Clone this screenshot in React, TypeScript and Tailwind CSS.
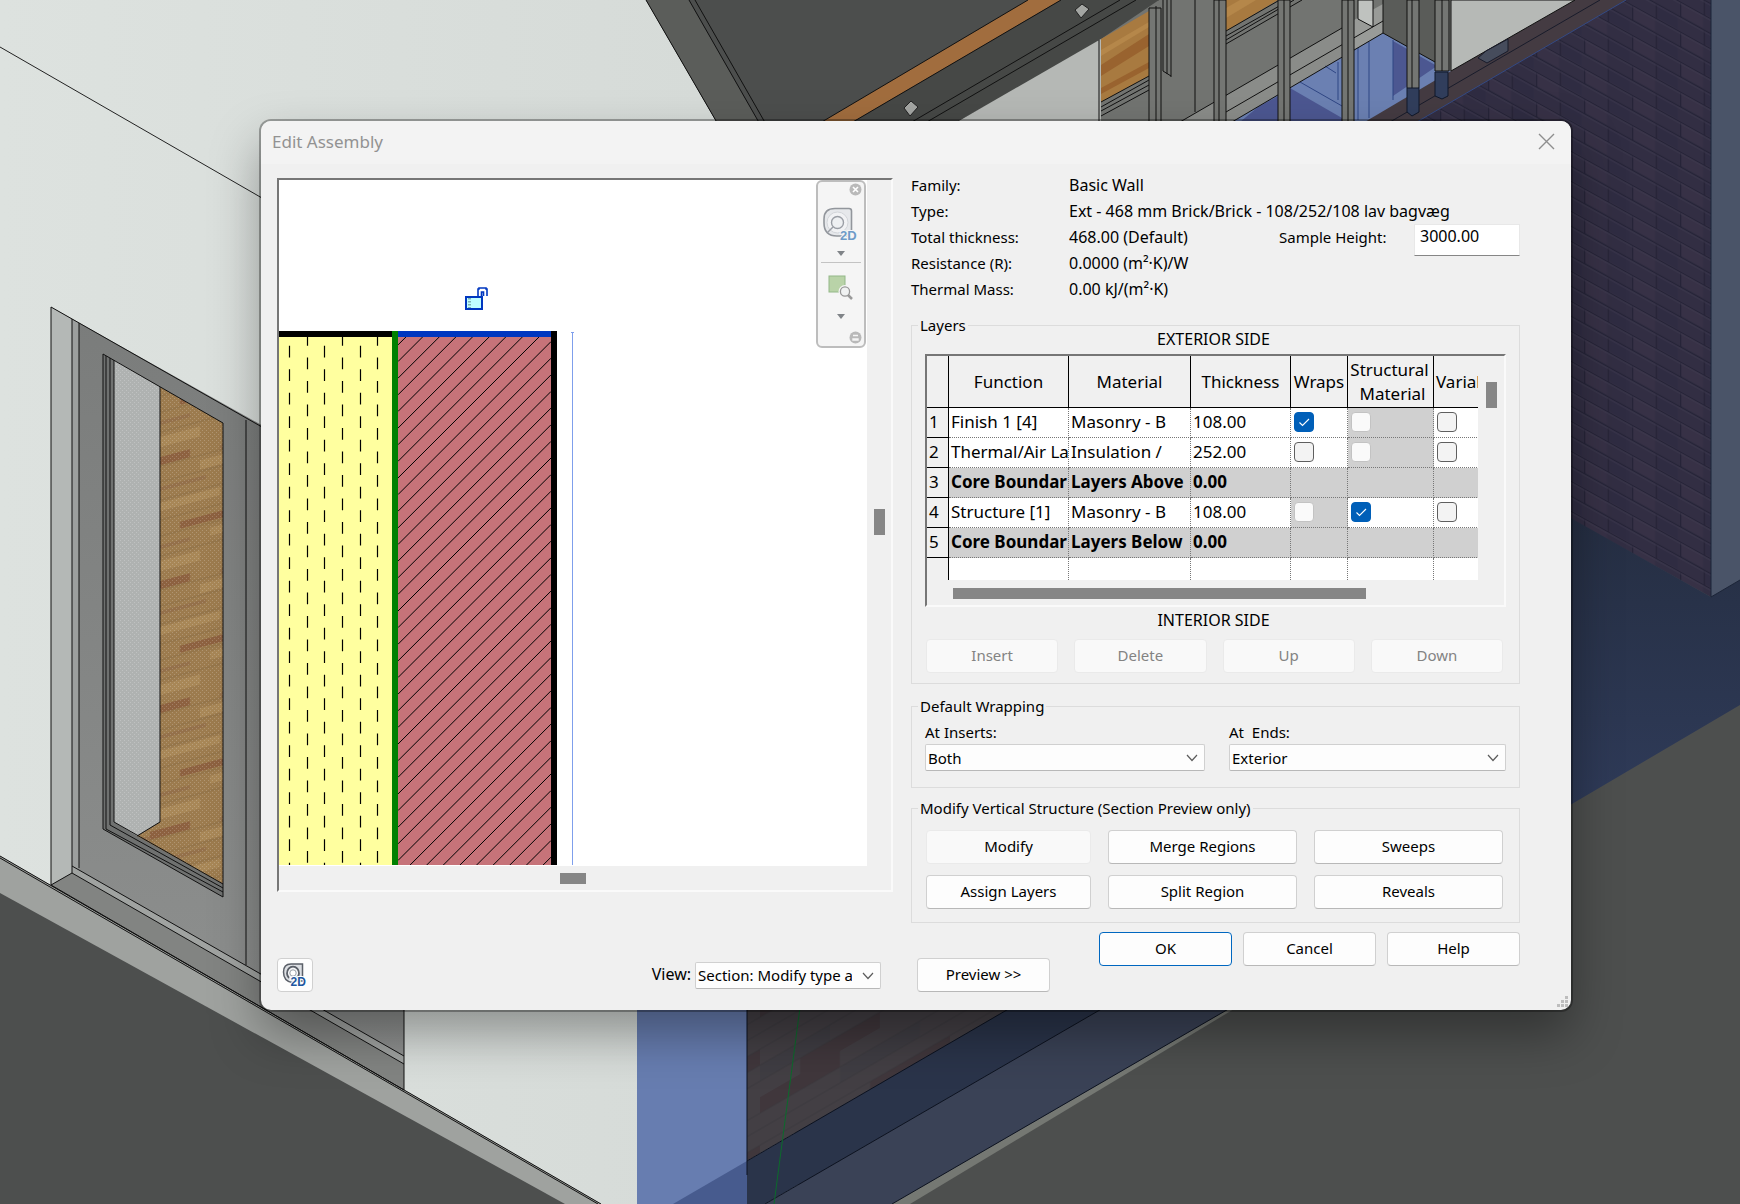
import { useState, ReactNode } from 'react';
import clsx from 'clsx';

interface LayerRow {
  func: string;
  material: string;
  thickness: string;
  core?: boolean;
  wraps?: boolean;
  wrapsLocked?: boolean;
  structural?: boolean;
  structuralLocked?: boolean;
}

const layers: LayerRow[] = [
  { func: 'Finish 1 [4]', material: 'Masonry - B', thickness: '108.00', wraps: true, structuralLocked: true },
  { func: 'Thermal/Air La', material: 'Insulation /', thickness: '252.00', structuralLocked: true },
  { func: 'Core Boundar', material: 'Layers Above', thickness: '0.00', core: true },
  { func: 'Structure [1]', material: 'Masonry - B', thickness: '108.00', wrapsLocked: true, structural: true },
  { func: 'Core Boundar', material: 'Layers Below', thickness: '0.00', core: true },
];

const info = [
  ['Family:', 'Basic Wall'],
  ['Type:', 'Ext - 468 mm Brick/Brick - 108/252/108 lav bagvæg'],
  ['Total thickness:', '468.00 (Default)'],
  ['Resistance (R):', '0.0000 (m²·K)/W'],
  ['Thermal Mass:', '0.00 kJ/(m²·K)'],
];

function Scene() {
  return (
    <svg className="absolute inset-0 w-full h-full" viewBox="0 0 1740 1204" preserveAspectRatio="xMidYMid slice" aria-hidden="true">
      <defs>
        <pattern id="brick" width="48" height="30" patternUnits="userSpaceOnUse" patternTransform="skewY(29)">
          <rect width="48" height="30" fill="#322e43" />
          <rect x="1" y="1" width="22" height="13" fill="#373146" />
          <rect x="26" y="16" width="20" height="13" fill="#2f2c42" />
          <path d="M0 .5H48M0 15.5H48M.5 0V15M24.5 15V30" stroke="#252337" strokeWidth="1.4" />
          <path d="M0 2H48M0 17H48" stroke="#413c53" strokeWidth=".7" />
        </pattern>
        <pattern id="planks" width="150" height="124" patternUnits="userSpaceOnUse" patternTransform="skewY(-15)">
          <rect width="150" height="124" fill="#9c7b4e" />
          <path d="M0 4H40V12H0zM90 40H150V47H90zM30 74H96V81H30zM110 100H150V107H110z" fill="#8d6140" />
          <path d="M50 18H150V27H50zM0 50H70V58H0zM60 88H130V96H60zM0 108H50V118H0z" fill="#a88757" />
          <path d="M70 8H150V13H70zM0 34H56V38H0zM100 62H150V67H100zM0 92H40V96H0z" fill="#94704a" />
          <path d="M0 13H150M0 29H150M0 47H150M0 67H150M0 83H150M0 103H150" stroke="#8a6b45" strokeWidth=".8" />
        </pattern>
        <pattern id="darkPlanks" width="190" height="96" patternUnits="userSpaceOnUse" patternTransform="skewY(-30)">
          <rect width="190" height="96" fill="#433f44" />
          <path d="M0 0H80V16H0zM110 48H190V64H110zM40 80H120V96H40z" fill="#40373c" />
          <path d="M80 16H160V32H80zM0 64H70V80H0z" fill="#3f3d43" />
          <path d="M0 16H190M0 32H190M0 48H190M0 64H190M0 80H190" stroke="#3a373d" strokeWidth=".8" />
        </pattern>
        <pattern id="mesh" width="4" height="4" patternUnits="userSpaceOnUse">
          <path d="M0 0h1v1H0zM2 2h1v1H2z" fill="#fff" opacity=".2" />
        </pattern>
        <linearGradient id="wall" x2="1">
          <stop offset="0" stopColor="#dde2df" />
          <stop offset="1" stopColor="#d5dad7" />
        </linearGradient>
        <linearGradient id="frame" y1="0" y2="1" x2="0">
          <stop offset="0" stopColor="#7a7c7b" />
          <stop offset="1" stopColor="#8f9190" />
        </linearGradient>
        <linearGradient id="navy" y1="0" y2="1" x2="0">
          <stop offset="0" stopColor="#252e42" />
          <stop offset="1" stopColor="#2f3b59" />
        </linearGradient>
      </defs>
      <rect width="1740" height="1204" fill="#4d4f4e" />

      {/* left facade */}
      <path d="M0 0H646L720 128L800 1204H601L0 856z" fill="url(#wall)" />
      <path d="M0 47L262 198" stroke="#222" fill="none" />
      <path d="M0 856L601 1204H565L0 893z" fill="#9fa29f" />
      <path d="M51 307L404 505V1090L51 885z" fill="url(#frame)" />
      <path d="M51 307L72 319V873L51 885z" fill="#b4b8b6" />
      <path d="M72 319L79 323V868L72 873z" fill="#9c9f9e" />
      <path d="M51 885L72 873L404 1064V1090z" fill="#828482" />
      <path d="M72 866L404 1056V1064L72 873z" fill="#a0a3a1" />
      <path d="M103 354L223 423V897L103 829z" fill="#6f7170" />
      <path d="M114 360L160 387V822L137 836L114 822z" fill="#afb2b1" />
      <path d="M160 387L223 423V884L137 836L160 822z" fill="url(#planks)" />
      <path d="M114 360L223 423V884L114 822z" fill="url(#mesh)" />
      <path
        d="M51 885V307L262 427M72 873V319M79 868V323M51 885L72 873M103 354L223 423V897L103 829zM106 356V829M110 358V825M114 360V822L223 884M106 829L223 892M110 825L223 888M160 387V822L137 836M246 420V965M72 866L404 1056M72 873L404 1064M51 885L404 1090M404 1000V1090"
        stroke="#111"
        fill="none"
      />
      <path d="M0 856L601 1204M0 858L598 1204" stroke="#111" fill="none" />

      {/* lower blue corner */}
      <path d="M637 1000H747V1204H637z" fill="#677db0" />
      <path d="M747 1161L673 1204H747z" fill="#475b8e" />
      <path d="M747 1000H1024L747 1161z" fill="url(#darkPlanks)" />
      <path d="M747 1161L1024 1000H1117L765 1204H747z" fill="#2a344a" />
      <path d="M1117 1000H1244L892 1204H765z" fill="#3a4256" />
      <path d="M1244 1000H1249L910 1204H892z" fill="#757873" />
      <path d="M747 1161L1024 1000M765 1204L1117 1000M892 1204L1244 1000M747 1000V1175" stroke="#0c1220" fill="none" />
      <path d="M801 1000L774 1204" stroke="#0c6b2c" fill="none" />

      {/* roof and beam */}
      <path d="M646 0H1159L950 126H719z" fill="#4c4e4d" />
      <path d="M646 0H689L761 126H719z" fill="#5b5d5a" />
      <path d="M646 0L719 126M689 0L761 126M695 0L767 126" stroke="#111" fill="none" />
      <path d="M1028 0H1061L846 126H815z" fill="#a16d3e" />
      <path d="M1061 0H1159Q1157 12 1148 18L950 126H846z" fill="#464846" />
      <path d="M1028 0L815 126M1061 0L846 126M1120 0L905 126M1136 0L920 126M1159 0Q1157 12 1148 18L950 126" stroke="#111" fill="none" />
      <path d="M1075 10L1082 4L1089 9L1081 18zM904 108L911 101L918 107L910 116z" fill="#a4a6a3" stroke="#222" />

      {/* framing */}
      <path d="M950 126L1101 39V126z" fill="#b5b8b5" />
      <path d="M1101 39L1159 0H1454V71L1360 126H1101z" fill="#727471" />
      <path d="M1101 39L1149 11V76L1101 102zM1226 0H1278L1226 31z" fill="#a87a40" />
      <path d="M1101 65L1149 34V46L1101 76zM1101 88L1149 62V68L1101 94z" fill="#99632f" />
      <path d="M1101 50L1149 22V27L1101 56zM1226 8L1240 0H1256L1226 18z" fill="#b5874a" />
      <path d="M1180 122L1342 28V58L1232 122z" fill="#8a8c89" />
      <path d="M1354 20L1383 4V33L1354 50z" fill="#999b98" />
      <path d="M1358 0H1373V27L1358 19z" fill="#bfc2bf" stroke="#111" />
      <path d="M1232 122L1383 33L1454 73L1370 122z" fill="#6b80b2" />
      <path d="M1290 88L1342 118V122H1290zM1258 107L1278 96V122H1240zM1393 41L1437 66L1393 96z" fill="#4c5791" />
      <path d="M1300 82L1342 106M1369 42V118M1358 48V120M1393 40V100M1338 62V100M1325 66L1336 73" stroke="#2f4684" fill="none" />
      <path d="M1383 0H1435V62L1383 33z" fill="#5a5c59" />
      <path d="M1101 102L1149 76M1101 107L1149 80M1101 111L1149 85M1101 116L1149 90M1226 31L1290 -6M1226 36L1290 0M1226 40L1294 0M1226 44L1302 0M1180 122L1342 28M1226 112L1383 21M1232 122L1383 33L1435 62M1383 0V33M1195 0V112M1163 0V71L1171 76M1167 0V74M1171 0V77" stroke="#111" fill="none" />
      <path d="M1149 8H1161V126H1149zM1214 0H1226V126H1214zM1278 0H1290V126H1278zM1342 0H1354V126H1342zM1407 0H1419V88L1412 92L1407 88zM1435 0H1449V71H1435z" fill="#747673" stroke="#111" />
      <path d="M1156 6V126M1219 0V126M1284 0V126M1348 0V126M1412 0V92M1442 0V71M1099 40V126" stroke="#111" fill="none" />

      {/* brick wall */}
      <path d="M1623 0H1711V597L1400 424V126z" fill="url(#brick)" />
      <path d="M1575 0H1626L1410 126H1358L1451 71z" fill="#443b42" />
      <path d="M1600 0L1390 122" stroke="#191c2b" fill="none" />
      <path d="M1626 0L1410 126" stroke="#344a85" fill="none" />
      <path d="M1451 0H1575L1451 71z" fill="#b6b9b6" stroke="#111" />
      <path d="M1486 51L1508 39V51L1487 63L1478 58z" fill="#464c5c" stroke="#191c2b" />
      <path d="M1407 88L1419 88V112L1412 116L1407 112zM1435 72L1448 72V96L1442 99L1435 96z" fill="#313e5c" stroke="#10182a" />
      <path d="M1560 512L1711 597L1740 580V705L1560 811z" fill="url(#navy)" />
      <path d="M1711 0H1740V580L1711 597z" fill="#4a5468" />
      <path d="M1711 0V597L1740 580" stroke="#1b2438" fill="none" />
    </svg>
  );
}

function Wheel2D() {
  return (
    <svg width="38" height="36" viewBox="0 0 38 36" className="overflow-visible" aria-hidden="true">
      <path d="M13 1.500H27Q29.500 1.500 29.500 4V23L24 29H15Q2 29 2 16V12Q2 1.500 13 1.500z" fill="#e6e8eb" stroke="#92969c" strokeWidth="1.600" />
      <circle cx="15.500" cy="15.500" r="10.500" fill="#f1f2f4" stroke="#d3d6da" />
      <circle cx="15.500" cy="15.500" r="6" fill="#eef0f2" stroke="#9a9ea5" strokeWidth="1.400" />
      <path d="M5.500 25.500L11 20" stroke="#9a9ea5" strokeWidth="1.400" />
      <text x="18" y="33" fontSize="13" fontWeight="700" fontFamily="Liberation Sans, sans-serif" fill="#6e9bc8" stroke="#f5f5f5" strokeWidth="2" paintOrder="stroke">2D</text>
    </svg>
  );
}

const hatch = Array.from({ length: 44 }, (_, i) => 267.3 + i * 16.63);
const dashColumns = [10.5, 28.5, 45.5, 63.5, 81.5, 98.5];

function SectionDrawing() {
  return (
    <svg className="block w-full h-full" aria-hidden="true">
      <defs>
        <clipPath id="brickLayer"><rect x="119" y="157" width="153" height="528" /></clipPath>
      </defs>
      <rect x="0" y="157" width="113" height="528" fill="#ffff9f" />
      {dashColumns.map((x, i) => (
        <line key={x} x1={x} x2={x} y1="157" y2="685" stroke="#000" strokeWidth="1.2" strokeDasharray="11.75 11.75" strokeDashoffset={i % 2 ? 3 : 14.7} />
      ))}
      <rect x="119" y="157" width="153" height="528" fill="#c67379" />
      <g clipPath="url(#brickLayer)" stroke="#000" strokeWidth="1">
        {hatch.map((s) => <line key={s} x1="119" y1={s - 119} x2="272" y2={s - 272} />)}
      </g>
      <rect x="0" y="151" width="114" height="6" />
      <rect x="119" y="151" width="156" height="6" fill="#0037c0" />
      <rect x="113" y="151" width="6" height="534" fill="#008000" />
      <rect x="272" y="151" width="6" height="534" />
      <path d="M293.5 152V685M292 152.500H295" stroke="#7f9fec" />
      <path d="M199 116V109H200V108H207V109H208V116M202.500 116V112H204.500V116" fill="none" stroke="#0037c0" strokeWidth="1.600" />
      <rect x="187" y="117" width="16" height="12" fill="#c0ffff" stroke="#0037c0" strokeWidth="2" />
      <path d="M190.500 118V128" stroke="#7fb4b4" strokeWidth="3" strokeDasharray="1.500 1.500" />
    </svg>
  );
}

function NavBar() {
  return (
    <div className="absolute top-0 right-px w-[50px] h-[168px] flex flex-col items-center rounded-md border-2 border-[#bdbdbd] bg-[#f5f5f5]">
      <button aria-label="Close navigation bar" className="self-end mt-px mr-0.5">
        <svg width="13" height="13" viewBox="0 0 13 13"><circle cx="6.500" cy="6.500" r="6" fill="#b9b9b9" /><path d="M4 4L9 9M9 4L4 9" stroke="#fff" strokeWidth="1.600" /></svg>
      </button>
      <button aria-label="Steering wheel 2D" className="mt-[11px] flex flex-col items-center">
        <Wheel2D />
        <svg width="8" height="5" viewBox="0 0 8 5" className="mt-2"><path d="M0 0H8L4 5z" fill="#808488" /></svg>
      </button>
      <div className="w-10 h-px mt-1.5 shrink-0 bg-[#c3c3c3]" />
      <button aria-label="Zoom" className="mt-3 flex flex-col items-center">
        <svg width="26" height="25" viewBox="0 0 26 25">
          <rect x="1" y="1" width="16" height="16" fill="#b9d3a8" stroke="#93b888" />
          <path d="M17 17L24 24" stroke="#f5f5f5" strokeWidth="5" />
          <circle cx="17" cy="16.500" r="6.500" fill="#f5f5f5" />
          <path d="M20 20L24 24" stroke="#9a9a9a" strokeWidth="2.500" />
          <circle cx="17" cy="16.500" r="4.600" fill="#f0f2f2" stroke="#979797" strokeWidth="1.300" />
        </svg>
        <svg width="8" height="5" viewBox="0 0 8 5" className="mt-3.5"><path d="M0 0H8L4 5z" fill="#808488" /></svg>
      </button>
      <button aria-label="Customize" className="self-end mt-auto mr-0.5 mb-0.5">
        <svg width="13" height="13" viewBox="0 0 13 13"><circle cx="6.500" cy="6.500" r="6" fill="#b9b9b9" /><path d="M4 4.500H9M4 8H9V9H4z" stroke="#f5f5f5" strokeWidth="1.400" fill="none" /></svg>
      </button>
    </div>
  );
}

function Button({ children, className, muted, primary, ...rest }: { children: ReactNode; className?: string; muted?: boolean; primary?: boolean; disabled?: boolean; onClick?: () => void }) {
  return (
    <button
      {...rest}
      className={clsx(
        'flex items-center justify-center pb-0.5 rounded border h-[34px] disabled:text-[#838383]',
        muted && 'border-[#eaeaea] bg-[#f9f9f9]',
        primary && 'border-[#0067c0] bg-[#fdfdfd]',
        !muted && !primary && 'border-[#d0d0d0] border-b-[#b8b8b8] bg-[#fdfdfd]',
        className
      )}
    >
      {children}
    </button>
  );
}

function Select({ id, options, className }: { id: string; options: string[]; className?: string }) {
  return (
    <div className={clsx('relative', className)}>
      <select id={id} className="appearance-none block w-full h-[27px] pl-0.5 pr-7 leading-[22px] rounded-xs border border-[#d0d0d0] border-b-[#b8b8b8] bg-[#fdfdfd]">
        {options.map((o) => <option key={o}>{o}</option>)}
      </select>
      <svg width="12" height="8" viewBox="0 0 12 8" className="absolute right-[7px] top-2.5 pointer-events-none">
        <path d="M1 1L6 6.500L11 1" fill="none" stroke="#5c5c5c" strokeWidth="1.200" />
      </svg>
    </div>
  );
}

function Check({ label, checked = false, locked = false }: { label: string; checked?: boolean; locked?: boolean }) {
  const [on, setOn] = useState(checked);
  return (
    <span className="relative block w-5 h-5 ml-px">
      <input
        type="checkbox"
        aria-label={label}
        checked={on}
        disabled={locked}
        onChange={(e) => setOn(e.target.checked)}
        className="appearance-none block w-5 h-5 rounded border border-[#5f5f5f] bg-[#f3f3f3] checked:border-[#005fb8] checked:bg-[#005fb8] disabled:border-[#c3c3c3] disabled:bg-[#fafafa]"
      />
      {on && (
        <svg width="20" height="20" viewBox="0 0 20 20" className="absolute inset-0 pointer-events-none">
          <path d="M5.500 10.500L8.500 13.500L15 7" fill="none" stroke="#fff" strokeWidth="1.100" />
        </svg>
      )}
    </span>
  );
}

function Group({ title, className, children }: { title: string; className?: string; children: ReactNode }) {
  return (
    <fieldset className={clsx('min-w-0 border border-[#dcdcdc]', className)}>
      <legend className="ml-1.5 px-0.5 leading-4">{title}</legend>
      {children}
    </fieldset>
  );
}

function LayerTable() {
  const head = 'border-r border-b border-black bg-[#f0f0f0] font-normal p-0';
  const cell = 'border-r border-b border-dotted border-[#777] p-0 pb-0.5 pl-0.5 whitespace-nowrap overflow-hidden';
  return (
    <div className="mt-[9px] mx-[13px] border-2 border-t-[#767676] border-l-[#767676] border-r-[#fafafa] border-b-[#fafafa]">
      <div className="flex">
        <div className="flex-1 min-w-0 h-[224px] overflow-hidden bg-white">
          <table className="table-fixed w-[640px] border-separate border-spacing-0 text-[17px] leading-6">
            <colgroup>
              <col className="w-[22px]" />
              <col className="w-[120px]" />
              <col className="w-[122px]" />
              <col className="w-[100px]" />
              <col className="w-[57px]" />
              <col className="w-[86px]" />
              <col className="w-[133px]" />
            </colgroup>
            <thead>
              <tr className="h-[52px]">
                <th className={head} />
                <th className={head}>Function</th>
                <th className={head}>Material</th>
                <th className={head}>Thickness</th>
                <th className={head}>Wraps</th>
                <th className={clsx(head, 'pr-0.5')}>Structural<br /><span className="ml-1.5">Material</span></th>
                <th className={clsx(head, 'text-left pl-0.5')}>Variable</th>
              </tr>
            </thead>
            <tbody>
              {layers.map((row, i) => (
                <tr key={i} className={clsx('h-[30px]', row.core && 'bg-[#d0d0d0] font-bold')}>
                  <th className={clsx(head, 'text-left pl-0.5 pb-0.5')}>{i + 1}</th>
                  <td className={cell}>{row.func}</td>
                  <td className={cell}>{row.material}</td>
                  <td className={cell}>{row.thickness}</td>
                  <td className={clsx(cell, row.wrapsLocked && 'bg-[#d0d0d0]')}>
                    {!row.core && <Check label={`Wraps ${i + 1}`} checked={row.wraps} locked={row.wrapsLocked} />}
                  </td>
                  <td className={clsx(cell, row.structuralLocked && 'bg-[#d0d0d0]')}>
                    {!row.core && <Check label={`Structural material ${i + 1}`} checked={row.structural} locked={row.structuralLocked} />}
                  </td>
                  <td className={cell}>{!row.core && <Check label={`Variable ${i + 1}`} />}</td>
                </tr>
              ))}
              <tr className="h-[30px]">
                <th className={head} />
                {[0, 1, 2, 3, 4, 5].map((n) => <td key={n} className={cell} />)}
              </tr>
            </tbody>
          </table>
        </div>
        <div className="w-[26px] pt-[26px] pl-2">
          <div className="w-[11px] h-[26px] bg-[#868686]" />
        </div>
      </div>
      <div className="h-[25px] pt-2 pl-[26px]">
        <div className="w-3/4 h-[11px] bg-[#868686]" />
      </div>
    </div>
  );
}

export default function App() {
  const [height, setHeight] = useState('3000.00');

  return (
    <div className="relative min-h-screen overflow-hidden font-['Noto_Sans',sans-serif] text-[15px] text-black">
      <Scene />
      <main className="relative pt-[121px] pl-[261px] pr-[169px] pb-12">
        <div role="dialog" aria-label="Edit Assembly" className="relative rounded-[10px] bg-[#f0f0f0] ring-2 ring-black/30 shadow-[0_24px_50px_rgba(0,0,0,0.35)] overflow-hidden">
          <header className="flex items-center justify-between h-[43px] pl-[11px] pr-4 pb-0.5 bg-[#f3f3f3]">
            <h1 className="text-[17px] text-[#929292]">Edit Assembly</h1>
            <button aria-label="Close">
              <svg width="17" height="17" viewBox="0 0 17 17"><path d="M1 1L16 16M16 1L1 16" stroke="#8e8e8e" strokeWidth="1.400" /></svg>
            </button>
          </header>

          <div className="flex gap-[18px] pl-4 pr-[51px] pb-[18px]">
            <section className="flex-1 min-w-0 pt-3.5 flex flex-col">
              <div className="border-2 border-t-[#767676] border-l-[#767676] border-r-[#fafafa] border-b-[#fafafa]">
                <div className="flex">
                  <div className="relative flex-1 min-w-0 h-[686px] bg-white">
                    <SectionDrawing />
                    <NavBar />
                  </div>
                  <div className="w-6 pb-0.5 flex flex-col justify-center items-center">
                    <div className="w-[11px] h-[26px] bg-[#868686]" />
                  </div>
                </div>
                <div className="h-6 pr-6 flex items-center justify-center">
                  <div className="w-[26px] h-[11px] bg-[#868686]" />
                </div>
              </div>
              <div className="flex items-center mt-auto pr-3">
                <button aria-label="Steering wheel" className="flex items-center justify-center w-9 h-[34px] rounded border border-[#d0d0d0] bg-[#fdfdfd]">
                  <svg width="26" height="28" viewBox="0 0 26 28" className="overflow-visible">
                    <path d="M9 3H20.500V20H15L10 21.500Q1.500 20 1.500 11Q1.500 3 9 3z" fill="#dcdfe3" stroke="#5a5f68" strokeWidth="1.500" />
                    <path d="M7 17A6 6.500 0 1 1 15 17" fill="#f4f5f7" stroke="#5a5f68" strokeWidth="1.800" />
                    <circle cx="11" cy="12" r="3.200" fill="#fff" stroke="#9aa0a8" />
                    <text x="8.500" y="25" fontSize="12" fontWeight="700" fontFamily="Liberation Sans, sans-serif" fill="#1d57a0" stroke="#fff" strokeWidth="2" paintOrder="stroke">2D</text>
                  </svg>
                </button>
                <label htmlFor="view" className="ml-auto mr-1 pb-0.5 text-base">View:</label>
                <Select id="view" className="w-[186px]" options={['Section: Modify type attributes', 'Floor Plan: Modify type attributes']} />
              </div>
            </section>

            <section className="w-[609px] shrink-0 pt-2">
              <div className="grid grid-cols-[158px_1fr_135px_106px] auto-rows-[26px] leading-[26px]">
                {info.map(([label, value], i) => (
                  <div key={label} className="contents">
                    <span>{label}</span>
                    <span className={clsx('text-base/[26px]', i !== 2 && 'col-span-3')}>{value}</span>
                    {i === 2 && (
                      <>
                        <label htmlFor="sample">Sample Height:</label>
                        <input id="sample" value={height} onChange={(e) => setHeight(e.target.value)} className="w-full h-8 px-[5px] pb-2 text-base bg-white border border-[#e8e8e8] border-b-[#868686]" />
                      </>
                    )}
                  </div>
                ))}
              </div>

              <Group title="Layers" className="mt-[15px] pb-2.5">
                <p className="pr-1 text-center text-base/3">EXTERIOR SIDE</p>
                <LayerTable />
                <p className="mt-[7px] pr-1 text-center text-base/3">INTERIOR SIDE</p>
                <div className="grid grid-cols-4 gap-4 mt-[13px] pl-3.5 pr-4">
                  {['Insert', 'Delete', 'Up', 'Down'].map((t) => <Button key={t} muted disabled>{t}</Button>)}
                </div>
              </Group>

              <Group title="Default Wrapping" className="mt-3.5 pb-4">
                <div className="flex justify-between pt-2 px-[13px]">
                  <div className="w-[280px]">
                    <label htmlFor="inserts" className="block leading-5 mb-0.5">At Inserts:</label>
                    <Select id="inserts" options={['Both', 'Exterior', 'Interior', 'Do not wrap']} />
                  </div>
                  <div className="w-[277px]">
                    <label htmlFor="ends" className="block leading-5 mb-0.5 whitespace-pre">At  Ends:</label>
                    <Select id="ends" options={['Exterior', 'Interior', 'None']} />
                  </div>
                </div>
              </Group>

              <Group title="Modify Vertical Structure (Section Preview only)" className="mt-3 pb-[13px]">
                <div className="grid grid-cols-[165fr_189fr_189fr] gap-x-[17px] gap-y-[11px] pt-3.5 pl-3.5 pr-4">
                  <Button muted>Modify</Button>
                  <Button>Merge Regions</Button>
                  <Button>Sweeps</Button>
                  <Button>Assign Layers</Button>
                  <Button>Split Region</Button>
                  <Button>Reveals</Button>
                </div>
              </Group>

              <div className="flex items-start gap-[11px] mt-[9px]">
                <Button className="w-[133px] ml-1.5 mt-[26px] mr-auto">Preview &gt;&gt;</Button>
                <Button primary className="w-[133px]">OK</Button>
                <Button className="w-[133px]">Cancel</Button>
                <Button className="w-[133px]">Help</Button>
              </div>
            </section>
          </div>

          <svg width="12" height="12" viewBox="0 0 12 12" className="absolute right-0.5 bottom-0.5" aria-hidden="true">
            <path d="M8 0h3v3H8zM8 4h3v3H8zM8 8h3v3H8zM4 4h3v3H4zM4 8h3v3H4zM0 8h3v3H0z" fill="#bdbdbd" />
          </svg>
        </div>
      </main>
    </div>
  );
}
